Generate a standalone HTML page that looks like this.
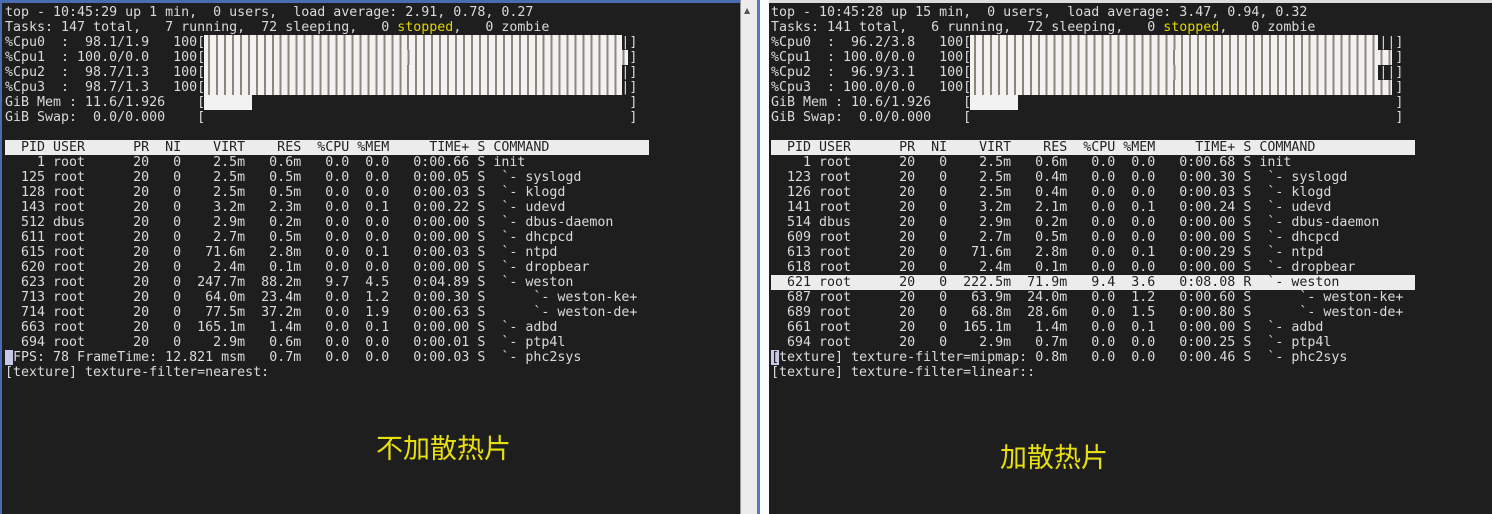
<!DOCTYPE html>
<html><head><meta charset="utf-8"><style>
*{margin:0;padding:0;box-sizing:border-box}
body{width:1492px;height:514px;background:#1e1e1e;position:relative;overflow:hidden}
.p{position:absolute;top:0;height:514px;background:#1e1e1e}
.t{position:absolute;top:5px;font-family:"DejaVu Sans Mono","Liberation Mono",monospace;font-size:13.3px;color:#dadada}
.t div{height:15px;line-height:15px;white-space:pre}
.hl{background:#ececec;color:#222;display:inline-block;width:80.5ch}
.y{color:#e0d400}
.bar{position:absolute;height:15px;background:repeating-linear-gradient(90deg,#f2f2f2 0 4px,#8d8678 4px 6px,#f2f2f2 6px 7.97px)}
.mem{position:absolute;height:15px;background:#f2f2f2}
.cur{background:#c8c8e8;color:#222}
.cn{position:absolute;font-family:"Noto Sans CJK SC","WenQuanYi Zen Hei",sans-serif;color:#e8df10;font-size:27px;line-height:30px}
</style></head><body>
<div class="p" style="left:0;width:740px;border-top:3px solid #4a6cb0;border-left:2px solid #4a6cb0"></div>
<div style="position:absolute;left:740px;top:0;width:17px;height:514px;background:#ececec;border-left:1px solid #999"></div>
<div style="position:absolute;left:744px;top:6px;color:#555;font-size:8px;font-family:'DejaVu Sans',sans-serif">▲</div>
<div style="position:absolute;left:757px;top:0;width:3px;height:514px;background:#5a78b8"></div>
<div style="position:absolute;left:760px;top:0;width:9px;height:514px;background:#fafcff"></div>
<div class="p" style="left:769px;width:723px;border-top:3px solid #dcdcdc"></div>

<div class="bar" style="left:204px;top:35px;width:418px"></div>
<div class="bar" style="left:204px;top:50px;width:424px"></div>
<div class="bar" style="left:204px;top:65px;width:418px"></div>
<div class="bar" style="left:204px;top:80px;width:418px"></div>
<div class="mem" style="left:204px;top:95px;width:48px"></div>
<div class="bar" style="left:970px;top:35px;width:408px"></div>
<div class="bar" style="left:970px;top:50px;width:422px"></div>
<div class="bar" style="left:970px;top:65px;width:408px"></div>
<div class="bar" style="left:970px;top:80px;width:422px"></div>
<div class="mem" style="left:970px;top:95px;width:48px"></div>

<div class="t" style="left:5px">
<div>top - 10:45:29 up 1 min,  0 users,  load average: 2.91, 0.78, 0.27</div>
<div>Tasks: 147 total,   7 running,  72 sleeping,   0 <span class="y">stopped</span>,   0 zombie</div>
<div>%Cpu0  :  98.1/1.9   100[                                                    |]</div>
<div>%Cpu1  : 100.0/0.0   100[                                                     ]</div>
<div>%Cpu2  :  98.7/1.3   100[                                                    |]</div>
<div>%Cpu3  :  98.7/1.3   100[                                                    |]</div>
<div>GiB Mem : 11.6/1.926    [                                                     ]</div>
<div>GiB Swap:  0.0/0.000    [                                                     ]</div>
<div> </div>
<div><span class="hl">  PID USER      PR  NI    VIRT    RES  %CPU %MEM     TIME+ S COMMAND</span></div>
<div>    1 root      20   0    2.5m   0.6m   0.0  0.0   0:00.66 S init</div>
<div>  125 root      20   0    2.5m   0.5m   0.0  0.0   0:00.05 S  `- syslogd</div>
<div>  128 root      20   0    2.5m   0.5m   0.0  0.0   0:00.03 S  `- klogd</div>
<div>  143 root      20   0    3.2m   2.3m   0.0  0.1   0:00.22 S  `- udevd</div>
<div>  512 dbus      20   0    2.9m   0.2m   0.0  0.0   0:00.00 S  `- dbus-daemon</div>
<div>  611 root      20   0    2.7m   0.5m   0.0  0.0   0:00.00 S  `- dhcpcd</div>
<div>  615 root      20   0   71.6m   2.8m   0.0  0.1   0:00.03 S  `- ntpd</div>
<div>  620 root      20   0    2.4m   0.1m   0.0  0.0   0:00.00 S  `- dropbear</div>
<div>  623 root      20   0  247.7m  88.2m   9.7  4.5   0:04.89 S  `- weston</div>
<div>  713 root      20   0   64.0m  23.4m   0.0  1.2   0:00.30 S      `- weston-ke+</div>
<div>  714 root      20   0   77.5m  37.2m   0.0  1.9   0:00.63 S      `- weston-de+</div>
<div>  663 root      20   0  165.1m   1.4m   0.0  0.1   0:00.00 S  `- adbd</div>
<div>  694 root      20   0    2.9m   0.6m   0.0  0.0   0:00.01 S  `- ptp4l</div>
<div><span class="cur"> </span>FPS: 78 FrameTime: 12.821 msm   0.7m   0.0  0.0   0:00.03 S  `- phc2sys</div>
<div>[texture] texture-filter=nearest:</div>
</div>

<div class="t" style="left:771px">
<div>top - 10:45:28 up 15 min,  0 users,  load average: 3.47, 0.94, 0.32</div>
<div>Tasks: 141 total,   6 running,  72 sleeping,   0 <span class="y">stopped</span>,   0 zombie</div>
<div>%Cpu0  :  96.2/3.8   100[                                                   ||]</div>
<div>%Cpu1  : 100.0/0.0   100[                                                     ]</div>
<div>%Cpu2  :  96.9/3.1   100[                                                   ||]</div>
<div>%Cpu3  : 100.0/0.0   100[                                                     ]</div>
<div>GiB Mem : 10.6/1.926    [                                                     ]</div>
<div>GiB Swap:  0.0/0.000    [                                                     ]</div>
<div> </div>
<div><span class="hl">  PID USER      PR  NI    VIRT    RES  %CPU %MEM     TIME+ S COMMAND</span></div>
<div>    1 root      20   0    2.5m   0.6m   0.0  0.0   0:00.68 S init</div>
<div>  123 root      20   0    2.5m   0.4m   0.0  0.0   0:00.30 S  `- syslogd</div>
<div>  126 root      20   0    2.5m   0.4m   0.0  0.0   0:00.03 S  `- klogd</div>
<div>  141 root      20   0    3.2m   2.1m   0.0  0.1   0:00.24 S  `- udevd</div>
<div>  514 dbus      20   0    2.9m   0.2m   0.0  0.0   0:00.00 S  `- dbus-daemon</div>
<div>  609 root      20   0    2.7m   0.5m   0.0  0.0   0:00.00 S  `- dhcpcd</div>
<div>  613 root      20   0   71.6m   2.8m   0.0  0.1   0:00.29 S  `- ntpd</div>
<div>  618 root      20   0    2.4m   0.1m   0.0  0.0   0:00.00 S  `- dropbear</div>
<div><span class="hl">  621 root      20   0  222.5m  71.9m   9.4  3.6   0:08.08 R  `- weston</span></div>
<div>  687 root      20   0   63.9m  24.0m   0.0  1.2   0:00.60 S      `- weston-ke+</div>
<div>  689 root      20   0   68.8m  28.6m   0.0  1.5   0:00.80 S      `- weston-de+</div>
<div>  661 root      20   0  165.1m   1.4m   0.0  0.1   0:00.00 S  `- adbd</div>
<div>  694 root      20   0    2.9m   0.7m   0.0  0.0   0:00.25 S  `- ptp4l</div>
<div><span class="cur">[</span>texture] texture-filter=mipmap: 0.8m   0.0  0.0   0:00.46 S  `- phc2sys</div>
<div>[texture] texture-filter=linear::</div>
</div>

<div class="cn" style="left:376px;top:432px">不加散热片</div>
<div class="cn" style="left:1000px;top:441px">加散热片</div>
</body></html>
